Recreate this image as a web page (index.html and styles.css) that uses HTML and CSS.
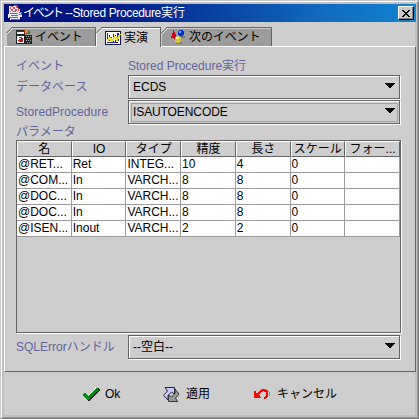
FILE: index.html
```html
<!DOCTYPE html>
<html lang="ja">
<head>
<meta charset="utf-8">
<title>イベント --Stored Procedure実行</title>
<link rel="stylesheet" href="styles.css">
</head>
<body>
<div class="window">
  <header class="titlebar">
    <svg class="app-icon" width="16" height="16" viewBox="0 0 16 16" shape-rendering="crispEdges"><path fill="#eceaf5" d="M2 1h9v3h2v3h2v5h-2v3H3v-2H1V9h1z"/><path fill="#e44c55" d="M4 1h2v1H4zM7 0h3v1H7zM3 2h1v2H3zM6 2h2v2H6zM9 1h2v2H9zM4 4h2v2H4zM8 4h2v2H8zM11 3h1v3h-1zM6 6h3v1H6zM3 6h1v1H3z"/><path stroke="#6868a8" fill="none" d="M3 8.500h8M4 10.500h7M12 7.500h2v2h-2M2 12.500h9M4 14.500h9"/></svg>
    <h1><span class="kana">イベント</span> <span class="latin">--Stored Procedure</span>実行</h1>
    <button class="close"><svg width="8" height="7" viewBox="0 0 8 7" shape-rendering="crispEdges"><path d="M0 0h2v1h1v1h2V1h1V0h2v1H7v1H6v1H5v1h1v1h1v1h1v1H6V6H5V5H3v1H2v1H0V6h1V5h1V4h1V3H2V2H1V1H0z"/></svg></button>
  </header>
  <nav class="tabs">
    <div class="tab t1"><svg class="edge" width="7" height="7"><path class="cut" d="M0 0h6L0 6z"/><path class="dark" d="M0 6.5L6.5 0"/><path class="light" d="M1 7L7 1"/></svg>
      <svg width="16" height="16" viewBox="0 0 16 16" shape-rendering="crispEdges"><path fill="#222" d="M0 1h9v14H0zM9 6h7v9H9z"/><path fill="#fff" d="M1 2h7v3H1zM1 7h7v7H1z"/><path fill="#333366" d="M1 2h7v1H1z"/><path fill="#b02020" d="M3 8h3v1h1v4H3v-1H2v-1h1v-1h2V9H3zM8 1h4v3H8z"/><path fill="#c89828" d="M9 1h3v3H9z"/><path fill="#357535" d="M12 2h2v3h-4V4h2z"/><path fill="#aaa" d="M10 7h1v1h-1zM12 7h1v1h-1zM14 7h1v1h-1zM11 9h1v1h-1zM13 9h1v1h-1zM10 11h1v1h-1zM12 11h1v1h-1zM14 11h1v1h-1zM11 13h1v1h-1zM13 13h1v1h-1z"/></svg><span>イベント</span></div>
    <div class="tab t2 active"><svg class="edge" width="7" height="7"><path class="cut" d="M0 0h6L0 6z"/><path class="dark" d="M0 6.5L6.5 0"/><path class="light" d="M1 7L7 1"/></svg>
      <svg width="16" height="16" viewBox="0 0 16 16" shape-rendering="crispEdges"><path fill="#111144" d="M0 1h16v14H0z"/><path fill="#fff" d="M1 2h14v12H1z"/><path fill="#2020c0" d="M2 3h1v8H2zM4 5h1v6H4zM6 7h1v6H6zM8 4h1v8H8zM10 5h1v8h-1zM12 3h2v8h-2zM2 12h11v1H2z"/><path stroke="#e8df20" stroke-width="2" fill="none" d="M2 11l3-3 2 3 3-4 2 3 3-6"/></svg><span>実演</span></div>
    <div class="tab t3"><svg class="edge" width="7" height="7"><path class="cut" d="M0 0h6L0 6z"/><path class="dark" d="M0 6.5L6.5 0"/><path class="light" d="M1 7L7 1"/></svg>
      <svg width="16" height="16" viewBox="0 0 16 16" shape-rendering="crispEdges"><path fill="#777" d="M6 13h6v2H6zM10 7h5v2h-5z"/><path fill="#d80010" d="M3 1h1v2h1v2h1v5H4V9H1V7h1V4h1z"/><path fill="#0030d0" d="M9 1h4v1h1v4h-1v1H9V6H8V2h1z"/><path fill="#70b0ff" d="M9 2h2v2H9z"/><path fill="#cfc040" d="M5 8h2V7h3v1h1v4h-1v2H6v-1H5z"/><path fill="#fff080" d="M6 8h3v2H6z"/></svg><span>次のイベント</span></div>
  </nav>
  <main class="panel">
    <div class="row event"><label>イベント</label><span class="caption">Stored Procedure実行</span></div>
    <div class="row combo-row"><label>データベース</label><div class="combo"><span>ECDS</span><svg width="10" height="5" viewBox="0 0 10 5" shape-rendering="crispEdges"><path d="M0 0h10v1H9v1H8v1H7v1H6v1H4V4H3V3H2V2H1V1H0z"/></svg></div></div>
    <div class="row combo-row second"><label class="lat">StoredProcedure</label><div class="combo focused"><span class="tight">ISAUTOENCODE</span><svg width="10" height="5" viewBox="0 0 10 5" shape-rendering="crispEdges"><path d="M0 0h10v1H9v1H8v1H7v1H6v1H4V4H3V3H2V2H1V1H0z"/></svg></div></div>
    <div class="row params"><label>パラメータ</label></div>
    <div class="scroll">
      <table>
        <thead><tr><th>名</th><th>IO</th><th>タイプ</th><th>精度</th><th>長さ</th><th>スケール</th><th>フォー...</th></tr></thead>
        <tbody>
          <tr><td>@RET...</td><td>Ret</td><td>INTEG...</td><td>10</td><td>4</td><td>0</td><td></td></tr>
          <tr><td>@COM...</td><td>In</td><td>VARCH...</td><td>8</td><td>8</td><td>0</td><td></td></tr>
          <tr><td>@DOC...</td><td>In</td><td>VARCH...</td><td>8</td><td>8</td><td>0</td><td></td></tr>
          <tr><td>@DOC...</td><td>In</td><td>VARCH...</td><td>8</td><td>8</td><td>0</td><td></td></tr>
          <tr><td>@ISEN...</td><td>Inout</td><td>VARCH...</td><td>2</td><td>2</td><td>0</td><td></td></tr>
        </tbody>
      </table>
    </div>
    <div class="row combo-row"><label>SQLErrorハンドル</label><div class="combo"><span>--空白--</span><svg width="10" height="5" viewBox="0 0 10 5" shape-rendering="crispEdges"><path d="M0 0h10v1H9v1H8v1H7v1H6v1H4V4H3V3H2V2H1V1H0z"/></svg></div></div>
  </main>
  <footer class="actions">
    <button class="ok"><svg width="17" height="15" viewBox="0 0 17 15" shape-rendering="crispEdges"><path fill="none" stroke="#fff" stroke-width="3" d="M1 7l4 4 9-10"/><path fill="none" stroke="#222" stroke-width="3" d="M2 8l4 4 10-10"/><path fill="none" stroke="#008a10" stroke-width="3" d="M1 7l4 4 10-9"/></svg><span>Ok</span></button>
    <button class="apply"><svg width="17" height="17" viewBox="0 0 17 17"><path fill="#ccccff" stroke="#222244" d="M2 1.500h9.500V8L8.500 6 5 9.500v4.500L.5 9.500 4.500 5z"/><path fill="#999" stroke="#333" d="M14.500 15.500H5.500V9L8.500 11 12 7.500V3l4 5-3.500 4z"/></svg><span>適用</span></button>
    <button class="cancel"><svg width="16" height="13" viewBox="0 0 16 13" shape-rendering="crispEdges"><path fill="none" stroke="#888" d="M5 4l3-3h4l3 3v4"/><path fill="none" stroke="#f00" stroke-width="2" d="M3 7l4-4 3-1 3 2v4l-3 3"/><path fill="#f00" d="M0 3h2v2h2v2h2v2h1v1H0z"/></svg><span>キャンセル</span></button>
  </footer>
</div>
</body>
</html>
```
FILE: styles.css
```css
* { box-sizing: border-box; }
body {
  margin: 0;
  width: 419px;
  height: 419px;
  overflow: hidden;
  background: #cecece;
  font: 12px/16px "Liberation Sans", "Noto Sans CJK JP", sans-serif;
  color: #000;
}
svg { display: block; flex: none; }
button { font: inherit; color: inherit; }
.window {
  width: 419px;
  height: 419px;
  padding: 3px 2px 2px 3px;
  border: 1px solid;
  border-color: #c8c8c8 #777 #777 #c8c8c8;
  box-shadow: inset 1px 1px #fff, inset -1px -1px #999, inset 3px 3px #c0c0c0, inset -3px -3px #c0c0c0;
  display: flex;
  flex-direction: column;
}
.titlebar {
  height: 18px;
  flex: none;
  display: flex;
  align-items: center;
  padding: 0 2px 0 3px;
  color: #fff;
  background: linear-gradient(90deg, #00107b, #001886 25%, #0840a0 50%, #1168bd 76%, #1084d0);
}
.titlebar h1 {
  margin: 0;
  flex: 1;
  font-size: 12px;
  font-weight: 400;
  white-space: nowrap;
}
.kana { letter-spacing: -2.3px; }
.latin { letter-spacing: -.35px; }
.close {
  width: 16px;
  height: 14px;
  padding: 0 0 0 3px;
  border: 1px solid;
  border-color: #fff #000 #000 #fff;
  box-shadow: inset -1px -1px #808080;
  background: #c8c8c8;
}
.tabs { display: flex; height: 19px; margin: 5px 0 0 2px; flex: none; }
.tab {
  position: relative;
  display: flex;
  align-items: center;
  height: 19px;
  padding-left: 10px;
  background: #9c9c9c;
  border-top: 1px solid #636363;
  border-right: 1px solid #636363;
  box-shadow: inset 0 1px #cecece, inset 1px 0 #cecece;
  letter-spacing: -.1px;
  white-space: nowrap;
}
.tab span { margin-left: 3px; }
.tab .edge { position: absolute; left: 0; top: -1px; }
.edge .cut { fill: #cecece; }
.edge .dark { fill: none; stroke: #636363; }
.edge .light { fill: none; stroke: #eee; }
.t1 { width: 90px; }
.t2 { width: 65px; padding-left: 9px; }
.t3 { width: 111px; padding-left: 9px; }
.active { height: 20px; background: #cecece; box-shadow: inset 0 1px #fff, inset 1px 0 #fff; z-index: 1; }
.panel {
  height: 326px;
  flex: none;
  border: 1px solid;
  border-color: #fff #636363 #636363 #fff;
  padding: 11px 13px 0 11px;
}
.row { display: flex; align-items: center; color: #63639c; }
.row label { width: 112px; flex: none; white-space: nowrap; }
.event { height: 16px; }
.combo-row { height: 25px; }
.combo {
  height: 24px;
  width: 272px;
  border: 1px solid #636363;
  box-shadow: inset 1px 1px #fff, 1px 1px #fff;
  padding: 0 4px 0 4px;
  display: flex;
  align-items: center;
  justify-content: space-between;
  color: #000;
  position: relative;
}
.combo svg { margin-top: -2px; }
.focused::after { content: ""; position: absolute; inset: 2px 1px 1px 2px; border: 1px solid #9c9cce; }
.lat { letter-spacing: .1px; }
.tight { letter-spacing: -.1px; }
.params { height: 16px; }
.scroll {
  width: 385px;
  height: 193px;
  border: 1px solid #636363;
  box-shadow: 1px 1px #fff;
  margin-bottom: 1px;
}
table { table-layout: fixed; width: 383px; border-collapse: separate; border-spacing: 0; }
th {
  height: 16px;
  padding: 0;
  font-weight: 400;
  line-height: 14px;
  text-align: center;
  white-space: nowrap;
  border: 1px solid;
  border-color: #fff #636363 #636363 #fff;
}
td {
  height: 16px;
  padding: 0 0 0 1px;
  line-height: 15px;
  background: #fff;
  border: solid #9c9c9c;
  border-width: 0 1px 1px 0;
  white-space: nowrap;
}
.actions { display: flex; height: 44px; align-items: center; padding-left: 79px; }
.actions button { display: flex; align-items: center; padding: 0; border: 0; background: none; white-space: nowrap; }
.actions span { margin-left: 6px; }
.ok { width: 80px; }
.ok span { margin-left: 5px; }
.apply { width: 91px; }
.cancel span { margin-left: 7px; }
```
